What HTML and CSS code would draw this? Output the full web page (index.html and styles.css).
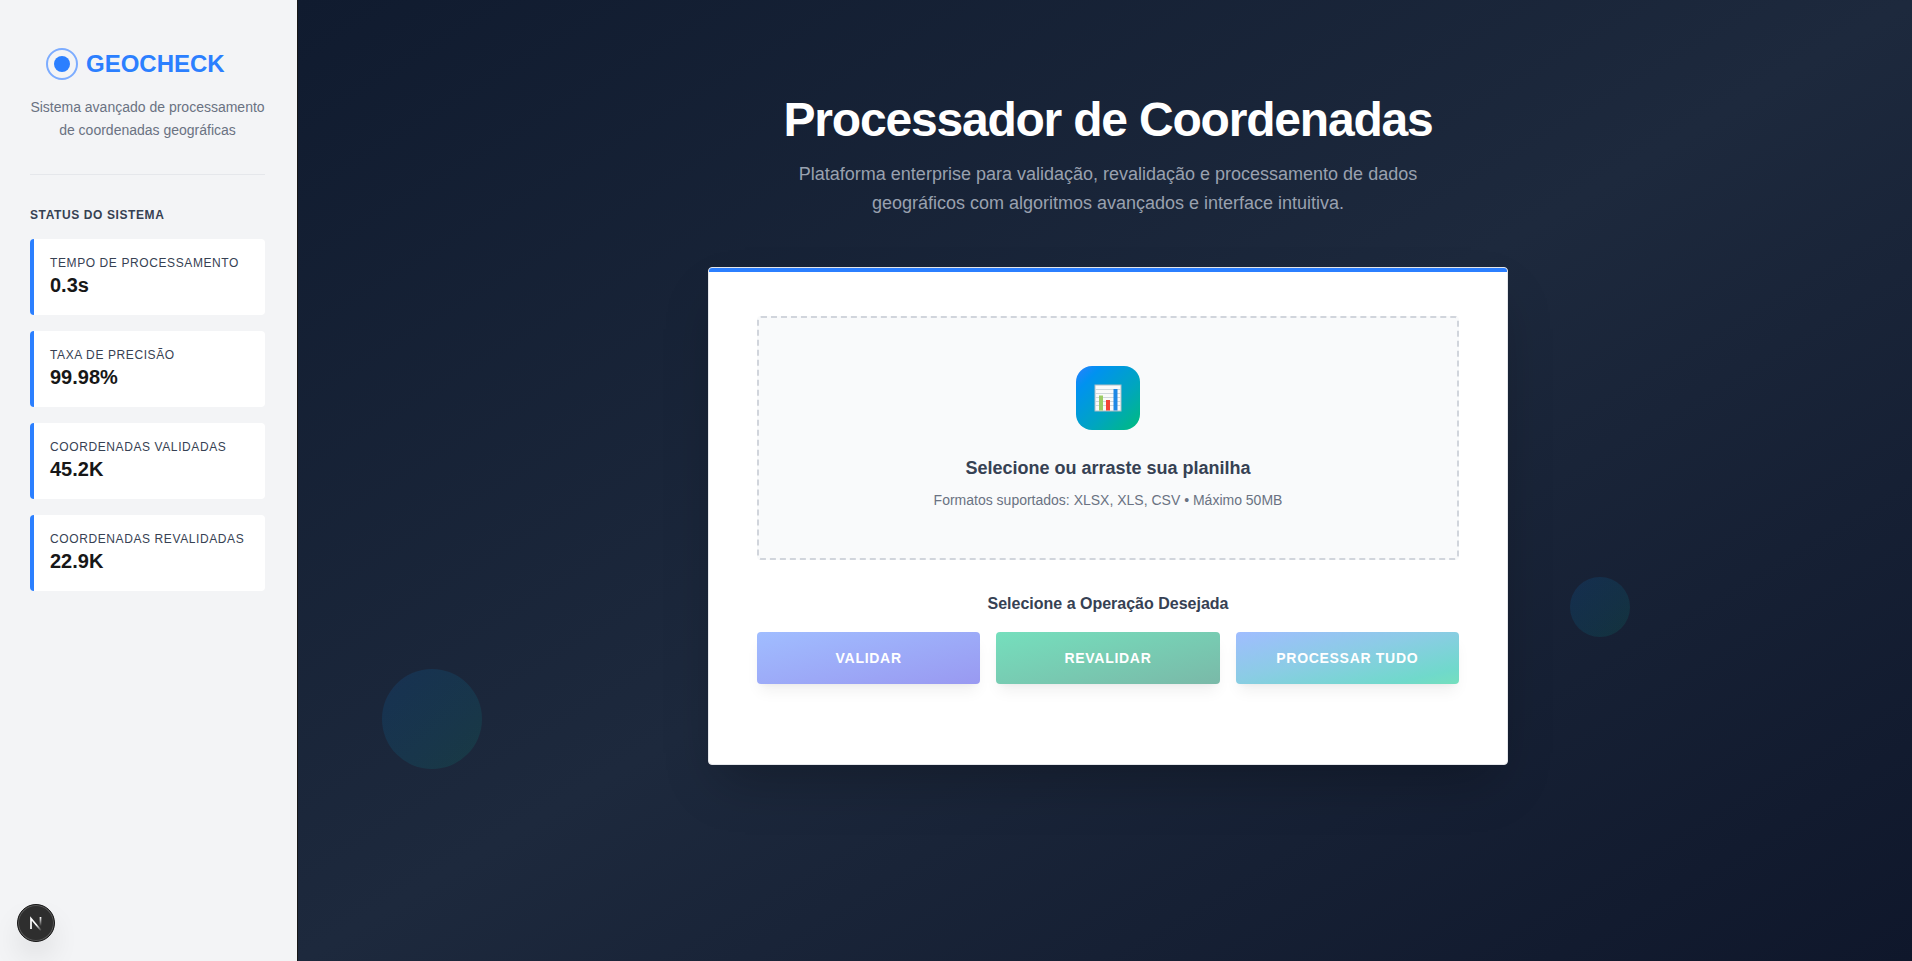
FILE: index.html
```html
<!DOCTYPE html>
<html lang="pt-BR">
<head>
<meta charset="utf-8">
<meta name="viewport" content="width=device-width, initial-scale=1">
<title>GeoCheck - Processador de Coordenadas</title>
<link rel="stylesheet" href="styles.css">
</head>
<body>
<div class="app">
  <aside class="sidebar">
    <header class="brand">
      <div class="brand-row">
        <span class="brand-mark" aria-hidden="true"></span>
        <span class="brand-name">GEOCHECK</span>
      </div>
      <p class="brand-text">Sistema avançado de processamento de coordenadas geográficas</p>
    </header>
    <section class="status">
      <h2 class="status-title">STATUS DO SISTEMA</h2>
      <dl class="stats">
        <div class="stat"><dt>TEMPO DE PROCESSAMENTO</dt><dd>0.3s</dd></div>
        <div class="stat"><dt>TAXA DE PRECISÃO</dt><dd>99.98%</dd></div>
        <div class="stat"><dt>COORDENADAS VALIDADAS</dt><dd>45.2K</dd></div>
        <div class="stat"><dt>COORDENADAS REVALIDADAS</dt><dd>22.9K</dd></div>
      </dl>
    </section>
  </aside>
  <main class="main">
    <span class="orb orb-large" aria-hidden="true"></span>
    <span class="orb orb-small" aria-hidden="true"></span>
    <header class="hero">
      <h1 class="hero-title">Processador de Coordenadas</h1>
      <p class="hero-text">Plataforma enterprise para validação, revalidação e processamento de dados geográficos com algoritmos avançados e interface intuitiva.</p>
    </header>
    <section class="card">
      <label class="drop" for="file">
        <input class="file-input" id="file" type="file" accept=".xlsx,.xls,.csv">
        <span class="drop-icon" aria-hidden="true">
          <svg width="28" height="28" viewBox="0 0 28 28">
            <rect x="1" y="1" width="26" height="26" fill="#fafafa" stroke="#b0bec5"/>
            <path d="M1 5.500h26M1 9.500h26M1 13.500h26M1 17.500h26M1 21.500h26" stroke="#cfd8dc"/>
            <path d="M5 11.500h4v15h-4z" fill="#9ccc65"/>
            <path d="M12 16h4v10.500h-4z" fill="#f44336"/>
            <path d="M19.500 5h4v21.500h-4z" fill="#1e88e5"/>
          </svg>
        </span>
        <span class="drop-title">Selecione ou arraste sua planilha</span>
        <span class="drop-text">Formatos suportados: XLSX, XLS, CSV • Máximo 50MB</span>
      </label>
      <h2 class="ops-title">Selecione a Operação Desejada</h2>
      <div class="ops">
        <button class="op op-validate" type="button" disabled>VALIDAR</button>
        <button class="op op-revalidate" type="button" disabled>REVALIDAR</button>
        <button class="op op-all" type="button" disabled>PROCESSAR TUDO</button>
      </div>
    </section>
  </main>
</div>
<button class="dev-badge" type="button" aria-label="Next.js">
  <svg width="36" height="36" viewBox="0 0 36 36" fill="none">
    <defs>
      <linearGradient id="stem" x1="0" y1="12" x2="0" y2="21" gradientUnits="userSpaceOnUse"><stop stop-color="#fff"/><stop offset="1" stop-color="#fff" stop-opacity="0"/></linearGradient>
      <linearGradient id="slash" x1="18" y1="20" x2="23" y2="26" gradientUnits="userSpaceOnUse"><stop stop-color="#fff"/><stop offset="1" stop-color="#fff" stop-opacity="0"/></linearGradient>
    </defs>
    <path d="M13 24V13.500L23 25.500" stroke="url(#slash)" stroke-width="1.700"/>
    <path d="M22.500 12v9" stroke="url(#stem)" stroke-width="1.700"/>
  </svg>
</button>
</body>
</html>
```
FILE: styles.css
```css
* { box-sizing: border-box; }

body {
  margin: 0;
  font-family: "Liberation Sans", Arial, sans-serif;
  background: #0f172b;
  color: #101828;
}

h1, h2, p, dl, dd { margin: 0; }

.app {
  display: grid;
  grid-template-columns: 298px 1fr;
  min-height: 100vh;
}

/* Sidebar */
.sidebar {
  padding: 48px 32px 32px 30px;
  border-right: 1px solid #171717;
  background: #f3f4f6;
}

.brand {
  padding-bottom: 32px;
  border-bottom: 1px solid #e5e7eb;
  text-align: center;
}

.brand-row {
  display: flex;
  align-items: center;
  gap: 8px;
  padding-left: 16px;
}

.brand-mark {
  display: grid;
  place-items: center;
  width: 32px;
  height: 32px;
  border: 2px solid #7cacff;
  border-radius: 50%;
}

.brand-mark::before {
  content: "";
  width: 16px;
  height: 16px;
  border-radius: 50%;
  background: #2b7fff;
}

.brand-name {
  font-size: 24px;
  line-height: 32px;
  font-weight: 700;
  color: #2b7fff;
}

.brand-text {
  margin-top: 16px;
  font-size: 14px;
  line-height: 23px;
  color: #6a7282;
}

.status { padding-top: 32px; }

.status-title {
  font-size: 12px;
  line-height: 16px;
  letter-spacing: 0.05em;
  color: #364153;
}

.stats {
  display: grid;
  gap: 16px;
  margin-top: 16px;
}

.stat {
  padding: 16px;
  border-left: 4px solid #2b7fff;
  border-radius: 4px;
  background: #fff;
}

.stat dt {
  font-size: 12px;
  line-height: 16px;
  letter-spacing: 0.05em;
  color: #364153;
}

.stat dd {
  font-size: 20px;
  line-height: 28px;
  font-weight: 700;
  color: #171717;
}

/* Main area */
.main {
  position: relative;
  display: flex;
  flex-direction: column;
  align-items: center;
  padding: 90px 32px 32px 38px;
  background: linear-gradient(to bottom right in oklab, #101b2f, #1d293d 50%, #0f172b);
}

.orb {
  position: absolute;
  border-radius: 50%;
  background: linear-gradient(135deg, #2b7fff, #0092f0 20%, #00a5c0 60%, #00bc7d);
  opacity: 0.12;
}

.orb-large {
  left: 84px;
  bottom: 20%;
  width: 100px;
  height: 100px;
}

.orb-small {
  right: 282px;
  top: 60%;
  width: 60px;
  height: 60px;
}

.hero {
  max-width: 672px;
  text-align: center;
}

.hero-title {
  font-size: 48px;
  line-height: 60px;
  letter-spacing: -0.025em;
  color: #fff;
}

.hero-text {
  margin-top: 10px;
  font-size: 18px;
  line-height: 29px;
  color: #99a1af;
}

.card {
  position: relative;
  overflow: hidden;
  width: 100%;
  max-width: 800px;
  margin-top: 49px;
  padding: 48px 48px 80px;
  border: 1px solid #e5e7eb;
  border-radius: 4px;
  background: #fff;
  box-shadow: 0 25px 50px -12px rgb(0 0 0 / 0.25);
}

.card::before {
  content: "";
  position: absolute;
  inset: 0 0 auto;
  height: 4px;
  background: #2b7fff;
}

.drop {
  display: flex;
  flex-direction: column;
  align-items: center;
  padding: 48px;
  border: 2px dashed #d1d5dc;
  border-radius: 4px;
  background: #f9fafb;
}

.file-input {
  position: absolute;
  width: 1px;
  height: 1px;
  opacity: 0;
}

.drop-icon {
  display: grid;
  place-items: center;
  width: 64px;
  height: 64px;
  border-radius: 16px;
  background: linear-gradient(135deg, #2b7fff, #0092f0 20%, #00a5c0 60%, #00bc7d);
}

.drop-title {
  margin-top: 24px;
  font-size: 18px;
  line-height: 28px;
  font-weight: 700;
  color: #364153;
}

.drop-text {
  margin-top: 8px;
  font-size: 14px;
  line-height: 20px;
  color: #6a7282;
}

.ops-title {
  margin-top: 32px;
  font-size: 16px;
  line-height: 24px;
  text-align: center;
  color: #364153;
}

.ops {
  display: grid;
  grid-template-columns: repeat(3, 1fr);
  gap: 16px;
  margin-top: 16px;
}

.op {
  padding: 16px;
  border: 0;
  border-radius: 4px;
  font: 700 14px/20px "Liberation Sans", Arial, sans-serif;
  letter-spacing: 0.05em;
  color: #fff;
  box-shadow: 0 10px 15px -3px rgb(0 0 0 / 0.06), 0 4px 6px -4px rgb(0 0 0 / 0.06);
}

.op-validate { background: linear-gradient(to bottom right, #a0bdff, #9999f1); }
.op-revalidate { background: linear-gradient(to bottom right, #75dfbd, #7ab9a8); }
.op-all { background: linear-gradient(to bottom right, #a0bdff, #8bcce5 45%, #70d9cb 85%, #75dfbd); }

/* Floating development badge */
.dev-badge {
  position: fixed;
  left: 17px;
  bottom: 19px;
  display: grid;
  place-items: center;
  width: 38px;
  height: 38px;
  padding: 0;
  border: 1px solid #171717;
  border-radius: 50%;
  background: #2e2e2e;
  box-shadow: inset 0 0 0 1px #5a5a5a, 0 16px 32px -8px rgb(0 0 0 / 0.24);
}
```
